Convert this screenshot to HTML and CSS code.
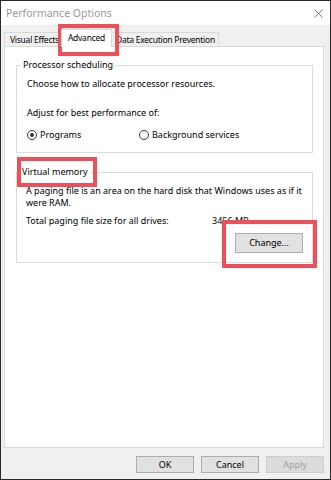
FILE: index.html
```html
<!DOCTYPE html>
<html lang="en">
<head>
  <meta charset="UTF-8">
  <title>Performance Options</title>
  <link rel="stylesheet" href="styles.css">
</head>
<body>
  <div class="window">

    <!-- Title bar -->
    <div class="titlebar">
      <span class="title">Performance Options</span>
      <svg class="close" width="9" height="9" viewBox="0 0 9 9">
        <path d="M0.5 0.5 L8.5 8.5 M8.5 0.5 L0.5 8.5" stroke="#7a7a7a" stroke-width="1" fill="none"/>
      </svg>
    </div>

    <!-- Tabs -->
    <div class="tabs">
      <div class="tab">Visual Effects</div>
      <div class="tab active">Advanced</div>
      <div class="tab">Data Execution Prevention</div>
    </div>

    <div class="panel">
      <fieldset class="group cpu">
        <legend>Processor scheduling</legend>
        <p class="line">Choose how to allocate processor resources.</p>
        <p class="line adjust">Adjust for best performance of:</p>
        <div class="radios">
          <label class="radio"><span class="circle checked"></span>Programs</label>
          <label class="radio"><span class="circle"></span>Background services</label>
        </div>
      </fieldset>

      <fieldset class="group vm">
        <legend>Virtual memory</legend>
        <p class="line">A paging file is an area on the hard disk that Windows uses as if it were RAM.</p>
        <div class="size-row">
          <span>Total paging file size for all drives:</span>
          <span>3456 MB</span>
        </div>
        <div class="change-row">
          <button class="btn change">Change...</button>
        </div>
      </fieldset>
    </div>

    <!-- Dialog buttons -->
    <div class="buttons">
      <button class="btn">OK</button>
      <button class="btn">Cancel</button>
      <button class="btn disabled">Apply</button>
    </div>

    <!-- Red highlight boxes -->
    <div class="mark mark-tab"></div>
    <div class="mark mark-vm"></div>
    <div class="mark mark-change"></div>
  </div>
</body>
</html>
```

FILE: styles.css
```css
html, body {
  margin: 0;
  padding: 0;
  background: #fff;
}

body {
  font-family: "Noto Sans", sans-serif;
  font-size: 9px;
  color: #000;
}

.window {
  position: relative;
  width: 331px;
  height: 480px;
  box-sizing: border-box;
  border: 1px solid #2a2a2a;
  background: #f0f0f0;
  display: flex;
  flex-direction: column;
}

/* Title bar */
.titlebar {
  height: 24px;
  flex: none;
  background: #fff;
  display: flex;
  align-items: center;
  justify-content: space-between;
  padding: 0 7px 0 5px;
}

.title {
  color: #9a9a9a;
  font-size: 10.5px;
}

/* Tabs */
.tabs {
  flex: none;
  height: 21px;
  display: flex;
  align-items: flex-end;
  padding-left: 3px;
}

.tab {
  height: 13px;
  line-height: 13px;
  padding: 0 3px 0 5px;
  border: 1px solid #d9d9d9;
  border-bottom: none;
  background: #f0f0f0;
  font-size: 8.5px;
  letter-spacing: -0.25px;
  white-space: nowrap;
}

.tab.active {
  position: relative;
  z-index: 1;
  height: 17px;
  line-height: 15px;
  margin: 0 -2px -1px;
  padding: 0 6px;
  background: #fff;
}

/* Tab page */
.panel {
  flex: none;
  height: 402px;
  box-sizing: border-box;
  margin: 0 6px 0 3px;
  padding: 12px 10px 0 11px;
  background: #fff;
  border: 1px solid #d9d9d9;
}

.group {
  margin: 0;
  border: 1px solid #dcdcdc;
  padding: 7px 10px 11px 10px;
  min-width: 0;
}

.group legend {
  line-height: 12px;
  padding: 0 2px;
  margin-left: -6px;
}

.vm {
  margin-top: 13px;
  padding: 7px 9px 9px 9px;
}

.line {
  margin: 0;
  line-height: 12px;
}

.adjust {
  margin-top: 17px;
}

.radios {
  margin-top: 10px;
  display: grid;
  grid-template-columns: 112px auto;
  line-height: 12px;
}

.radio {
  display: flex;
  align-items: center;
}

.circle {
  width: 10px;
  height: 10px;
  box-sizing: border-box;
  border: 1px solid #333;
  border-radius: 50%;
  margin-right: 3px;
  display: flex;
  align-items: center;
  justify-content: center;
}

.circle.checked::after {
  content: "";
  width: 4px;
  height: 4px;
  border-radius: 50%;
  background: #333;
}

.size-row {
  margin-top: 6px;
  display: grid;
  grid-template-columns: 186px auto;
  line-height: 12px;
}

.change-row {
  margin-top: 6px;
  display: flex;
  justify-content: flex-end;
}

/* Buttons */
.buttons {
  flex: none;
  display: flex;
  justify-content: flex-end;
  gap: 7px;
  margin: 8px 6px 0 0;
}

.btn {
  width: 58px;
  height: 17px;
  box-sizing: border-box;
  border: 1px solid #adadad;
  background: #e1e1e1;
  font-family: inherit;
  font-size: 9px;
  color: #000;
  padding: 0;
  line-height: 15px;
  text-align: center;
}

.btn.change {
  width: 68px;
  height: 20px;
  line-height: 18px;
}

.btn.disabled {
  color: #a0a0a0;
  background: #dcdcdc;
  border: 1px dotted #bfbfbf;
}

/* Highlight boxes drawn over the dialog */
.mark {
  position: absolute;
  box-sizing: border-box;
  border: 4px solid #ee4f59;
}

.mark-tab {
  left: 57px;
  top: 23px;
  width: 61px;
  height: 32px;
}

.mark-vm {
  left: 16px;
  top: 156px;
  width: 80px;
  height: 30px;
}

.mark-change {
  left: 221px;
  top: 219px;
  width: 95px;
  height: 48px;
}
```
